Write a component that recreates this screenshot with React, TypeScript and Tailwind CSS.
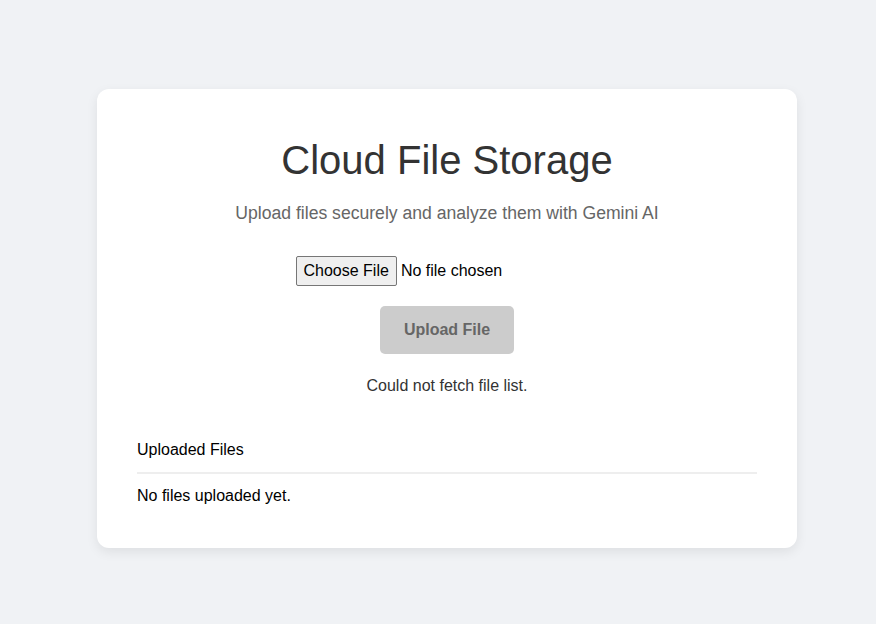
export default function App() {
  return (
    <div className="min-h-screen bg-[#f0f2f5] pl-[18px] pt-[89px] font-['Liberation_Sans',Arial,sans-serif]">
      <div className="mx-auto w-[700px] rounded-xl bg-white p-10 shadow-[0_4px_12px_rgba(0,0,0,0.08)]">
        <div className="text-center">
          <h1 className="mt-2 text-[40px] leading-[46px] text-[#333]">Cloud File Storage</h1>
          <p className="mt-4 text-[17.6px] leading-[28px] text-[#666]">
            Upload files securely and analyze them with Gemini AI
          </p>
          <div className="mt-[29px] flex justify-center">
            <input
              type="file"
              className="block h-[30px] text-base leading-[24px] text-black file:mr-[4px] file:h-[30px] file:rounded-[2px] file:border file:border-[#767676] file:bg-[#efefef] file:px-[7px] file:py-0 file:text-base file:text-black"
            />
          </div>
          <button
            disabled
            className="mt-5 h-12 w-[134px] rounded-[5px] bg-[#ccc] text-base font-bold text-[#666]"
          >
            Upload File
          </button>
          <p className="mt-5 text-base text-[#333]">Could not fetch file list.</p>
        </div>
        <div className="mt-10">
          <h2 className="border-b-2 border-[#eee] pb-[10px] text-base text-black">Uploaded Files</h2>
          <p className="mt-[10px] text-base text-black">No files uploaded yet.</p>
        </div>
      </div>
    </div>
  );
}
